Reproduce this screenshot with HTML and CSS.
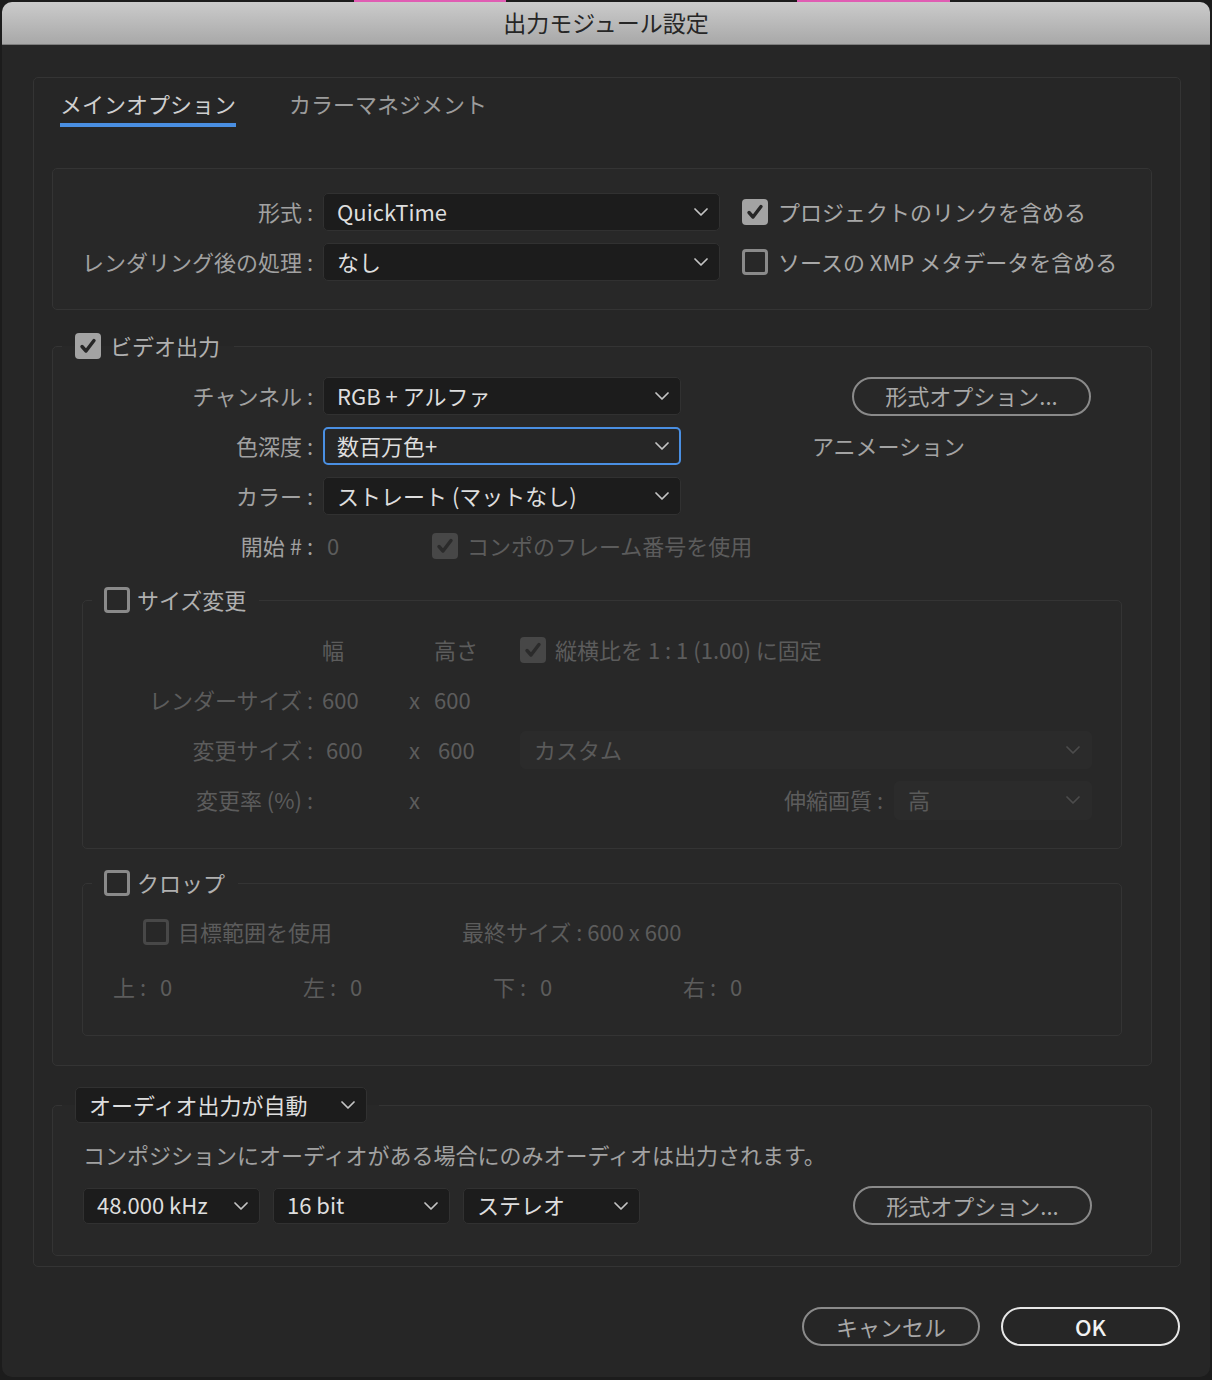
FILE: index.html
```html
<!DOCTYPE html>
<html lang="ja">
<head>
<meta charset="utf-8">
<title>出力モジュール設定</title>
<link rel="stylesheet" href="styles.css">
</head>
<body>
<div class="topstrip"><span class="pink p1"></span><span class="pink p2"></span></div>
<div class="dialog">
  <div class="titlebar">出力モジュール設定</div>
  <div class="content">
    <div class="panel">
      <div class="tabs">
        <div class="tab active">メインオプション</div>
        <div class="tab">カラーマネジメント</div>
      </div>

      <div class="box format-box">
        <div class="lbl">形式 :</div>
        <div class="select"><span>QuickTime</span><svg class="chev" viewBox="0 0 14 8" width="14" height="8"><path d="M1 1l6 6 6-6"/></svg></div>
        <div class="ck-line bright"><span class="cb checked"><svg viewBox="0 0 26 26" width="26" height="26"><path d="M7 13.5l4 4.5 8-10.5"/></svg></span>プロジェクトのリンクを含める</div>
        <div class="lbl">レンダリング後の処理 :</div>
        <div class="select"><span>なし</span><svg class="chev" viewBox="0 0 14 8" width="14" height="8"><path d="M1 1l6 6 6-6"/></svg></div>
        <div class="ck-line bright"><span class="cb"></span>ソースの XMP メタデータを含める</div>
      </div>

      <fieldset class="group video">
        <legend class="lg"><span class="cb checked"><svg viewBox="0 0 26 26" width="26" height="26"><path d="M7 13.5l4 4.5 8-10.5"/></svg></span>ビデオ出力</legend>
        <div class="video-grid">
          <div class="lbl">チャンネル :</div>
          <div class="select"><span>RGB + アルファ</span><svg class="chev" viewBox="0 0 14 8" width="14" height="8"><path d="M1 1l6 6 6-6"/></svg></div>
          <div class="vcol"><div class="pill fmt-btn">形式オプション...</div></div>
          <div class="lbl">色深度 :</div>
          <div class="select focused"><span>数百万色+</span><svg class="chev" viewBox="0 0 14 8" width="14" height="8"><path d="M1 1l6 6 6-6"/></svg></div>
          <div class="vcol"><span class="codec">アニメーション</span></div>
          <div class="lbl">カラー :</div>
          <div class="select"><span>ストレート (マットなし)</span><svg class="chev" viewBox="0 0 14 8" width="14" height="8"><path d="M1 1l6 6 6-6"/></svg></div>
          <div></div>
          <div class="lbl">開始 # :</div>
          <div class="start-row">
            <span class="start-val dis">0</span>
            <div class="ck-line dis"><span class="cb dis-checked"><svg viewBox="0 0 26 26" width="26" height="26"><path d="M7 13.5l4 4.5 8-10.5"/></svg></span>コンポのフレーム番号を使用</div>
          </div>
        </div>

        <fieldset class="group inner resize">
          <legend class="lg lg-inner"><span class="cb"></span>サイズ変更</legend>
          <div class="rs-grid">
            <div></div>
            <div class="dis pl9">幅</div>
            <div></div>
            <div class="dis">高さ</div>
            <div class="ck-line dis"><span class="cb dis-checked"><svg viewBox="0 0 26 26" width="26" height="26"><path d="M7 13.5l4 4.5 8-10.5"/></svg></span>縦横比を 1 : 1 (1.00) に固定</div>

            <div class="lbl dis">レンダーサイズ :</div>
            <div class="dis pl9">600</div>
            <div class="dis">x</div>
            <div class="dis">600</div>
            <div></div>

            <div class="lbl dis">変更サイズ :</div>
            <div class="dis pl13">600</div>
            <div class="dis">x</div>
            <div class="dis pl4">600</div>
            <div class="select disabled wide"><span>カスタム</span><svg class="chev" viewBox="0 0 14 8" width="14" height="8"><path d="M1 1l6 6 6-6"/></svg></div>

            <div class="lbl dis">変更率 (%) :</div>
            <div></div>
            <div class="dis">x</div>
            <div></div>
            <div class="quality">
              <span class="dis">伸縮画質 :</span>
              <div class="select disabled q-sel"><span>高</span><svg class="chev" viewBox="0 0 14 8" width="14" height="8"><path d="M1 1l6 6 6-6"/></svg></div>
            </div>
          </div>
        </fieldset>

        <fieldset class="group inner crop">
          <legend class="lg lg-inner"><span class="cb"></span>クロップ</legend>
          <div class="crop-row1">
            <div class="ck-line dis roi"><span class="cb dis-un"></span>目標範囲を使用</div>
            <div class="dis">最終サイズ : 600 x 600</div>
          </div>
          <div class="crop-row2">
            <div class="dis">上 :<span class="cval">0</span></div>
            <div class="dis">左 :<span class="cval">0</span></div>
            <div class="dis">下 :<span class="cval">0</span></div>
            <div class="dis">右 :<span class="cval">0</span></div>
          </div>
        </fieldset>
      </fieldset>

      <fieldset class="group audio">
        <legend class="lg lg-audio"><div class="select audio-auto"><span>オーディオ出力が自動</span><svg class="chev" viewBox="0 0 14 8" width="14" height="8"><path d="M1 1l6 6 6-6"/></svg></div></legend>
        <div class="audio-text">コンポジションにオーディオがある場合にのみオーディオは出力されます。</div>
        <div class="audio-row">
          <div class="select a-sel"><span>48.000 kHz</span><svg class="chev" viewBox="0 0 14 8" width="14" height="8"><path d="M1 1l6 6 6-6"/></svg></div>
          <div class="select a-sel"><span>16 bit</span><svg class="chev" viewBox="0 0 14 8" width="14" height="8"><path d="M1 1l6 6 6-6"/></svg></div>
          <div class="select a-sel"><span>ステレオ</span><svg class="chev" viewBox="0 0 14 8" width="14" height="8"><path d="M1 1l6 6 6-6"/></svg></div>
          <div class="pill audio-btn">形式オプション...</div>
        </div>
      </fieldset>
    </div>

    <div class="actions">
      <div class="pill cancel">キャンセル</div>
      <div class="pill ok">OK</div>
    </div>
  </div>
</div>
</body>
</html>
```

FILE: styles.css
```css
* { box-sizing: border-box; }

body {
  margin: 0;
  background: #1c1c1c;
  font-family: "Noto Sans CJK JP", "Noto Sans", sans-serif;
  font-size: 22px;
  line-height: 30px;
  color: #a1a1a1;
}

.topstrip { display: flex; height: 2px; }
.pink { height: 2px; background: #e05db3; }
.p1 { margin-left: 354px; width: 152px; }
.p2 { margin-left: 291px; width: 153px; }

.dialog {
  margin-left: 2px;
  width: 1208px;
  height: 1375px;
  background: #262626;
  border-radius: 10px;
  overflow: hidden;
}

.titlebar {
  height: 43px;
  border-bottom: 1px solid #7d7d7d;
  background: linear-gradient(#cbcbcb, #a8a8a8);
  color: #262626;
  font-size: 23px;
  line-height: 40px;
  text-align: center;
}

.content { padding: 32px 29px 30px 31px; }

.panel {
  border: 1px solid #343434;
  border-radius: 5px;
  padding-bottom: 10px;
}

/* tabs */
.tabs { display: flex; gap: 53px; padding-left: 26px; }
.tab {
  padding-top: 10px;
  padding-bottom: 5px;
  border-bottom: 4px solid transparent;
  color: #9c9c9c;
}
.tab.active { color: #cfcfcf; border-bottom-color: #4a8fe2; }

/* common */
.lbl { text-align: right; white-space: nowrap; padding-bottom: 3px; }
.dis { color: #5c5c5c; white-space: nowrap; }
.rs-grid > .dis, .crop-row1 > .dis, .crop-row2 > .dis, .start-val, .quality > .dis { padding-bottom: 3px; }
.bright { color: #a8a8a8; }

.select {
  display: flex;
  align-items: center;
  justify-content: space-between;
  height: 38px;
  padding: 0 11px 3px 13px;
  background: #1c1c1c;
  border: 1px solid #313131;
  border-radius: 5px;
  color: #dedede;
  white-space: nowrap;
}
.select .chev { flex: none; margin-top: 3px; }
.chev path { fill: none; stroke: #c4c4c4; stroke-width: 1.7; stroke-linecap: round; stroke-linejoin: round; }
.select.focused {
  background: #262626;
  border: 2px solid #4a8fe2;
  padding-left: 12px;
  padding-right: 10px;
}
.select.disabled {
  background: #2b2b2b;
  border-color: #2b2b2b;
  color: #5a5a5a;
}
.select.disabled .chev path { stroke: #4c4c4c; }

.ck-line { display: flex; align-items: center; gap: 9px; white-space: nowrap; padding-bottom: 3px; }
.ck-line .cb { margin-top: 2px; }

.cb {
  flex: none;
  width: 26px;
  height: 26px;
  border: 3px solid #8a8a8a;
  border-radius: 4px;
  display: flex;
  align-items: center;
  justify-content: center;
}
.cb svg { display: block; }
.cb path { fill: none; stroke-width: 3.4; stroke-linecap: round; stroke-linejoin: round; }
.cb.checked { background: #a3a3a3; border: none; }
.cb.checked path { stroke: #262626; }
.cb.dis-checked { background: #474747; border: none; }
.cb.dis-checked path { stroke: #2b2b2b; }
.cb.dis-un { border-color: #484848; }

.pill {
  display: flex;
  align-items: center;
  justify-content: center;
  height: 39px;
  padding-bottom: 2px;
  border: 2px solid #8a8a8a;
  border-radius: 20px;
  color: #a8a8a8;
  white-space: nowrap;
}

/* format box */
.box {
  border: 1px solid #343434;
  border-radius: 5px;
  background: #282828;
}
.format-box {
  margin: 41px 28px 0 18px;
  padding: 24px 0 28px;
  display: grid;
  grid-template-columns: 260px 397px 1fr;
  grid-auto-rows: 38px;
  column-gap: 10px;
  row-gap: 12px;
  align-items: center;
}
.format-box .ck-line { margin-left: 12px; gap: 10px; }

/* fieldsets */
.group {
  margin: 0;
  padding: 0;
  min-width: 0;
  border: 1px solid #343434;
  border-radius: 5px;
  background: #282828;
}
.lg {
  margin-left: 9px;
  padding: 0 14px 3px 13px;
  height: 30px;
  display: flex;
  align-items: center;
  gap: 9px;
  color: #b0b0b0;
}
.lg > .cb { margin-top: 3px; }
.video { margin: 21px 28px 0 18px; padding-bottom: 29px; }

.video-grid {
  margin-top: 16px;
  display: grid;
  grid-template-columns: 260px 358px 1fr;
  grid-auto-rows: 38px;
  column-gap: 10px;
  row-gap: 12px;
  align-items: center;
}
.vcol { display: flex; align-items: center; }
.fmt-btn { width: 239px; margin-left: 161px; }
.codec { margin-left: 121px; color: #a3a3a3; padding-bottom: 3px; }
.start-row { grid-column: 2 / 4; display: flex; align-items: center; }
.start-val { width: 109px; padding-left: 4px; }

.inner { margin: 20px 29px 0 29px; padding-bottom: 29px; background: transparent; }
.lg-inner { padding: 0 13px 3px 12px; gap: 7px; }
.crop { margin-top: 19px; }

.rs-grid {
  margin-top: 16px;
  display: grid;
  grid-template-columns: 230px 96px 25px 86px 1fr;
  grid-auto-rows: 38px;
  row-gap: 12px;
  align-items: center;
}
.pl9 { padding-left: 9px; }
.pl13 { padding-left: 13px; }
.pl4 { padding-left: 4px; }
.wide { margin-right: 29px; }
.quality { display: flex; align-items: center; justify-content: flex-end; gap: 11px; margin-right: 29px; }
.q-sel { width: 198px; height: 39px; }

.crop-row1 { margin-top: 15px; display: flex; align-items: center; height: 38px; padding-left: 60px; }
.roi { width: 319px; }
.crop-row2 { margin-top: 17px; display: flex; height: 38px; align-items: center; padding-left: 30px; }
.crop-row2 > div { width: 190px; }
.cval { margin-left: 14px; }

/* audio */
.audio { margin: 21px 28px 0 18px; padding-bottom: 30px; }
.lg-audio { padding: 0 12px 0 13px; height: 36px; }
.audio-auto { width: 292px; height: 36px; }
.audio-text { margin-top: 16px; padding-left: 30px; white-space: nowrap; }
.audio-row { margin-top: 17px; padding-left: 30px; display: flex; align-items: center; gap: 13px; height: 39px; }
.a-sel { width: 177px; height: 36px; }
.audio-btn { width: 239px; margin-left: auto; margin-right: 59px; }

/* actions */
.actions { margin-top: 40px; margin-right: 1px; display: flex; justify-content: flex-end; gap: 21px; }
.cancel { width: 178px; }
.ok { width: 179px; border: 2.5px solid #e6e6e6; color: #f2f2f2; font-weight: 500; }
```
